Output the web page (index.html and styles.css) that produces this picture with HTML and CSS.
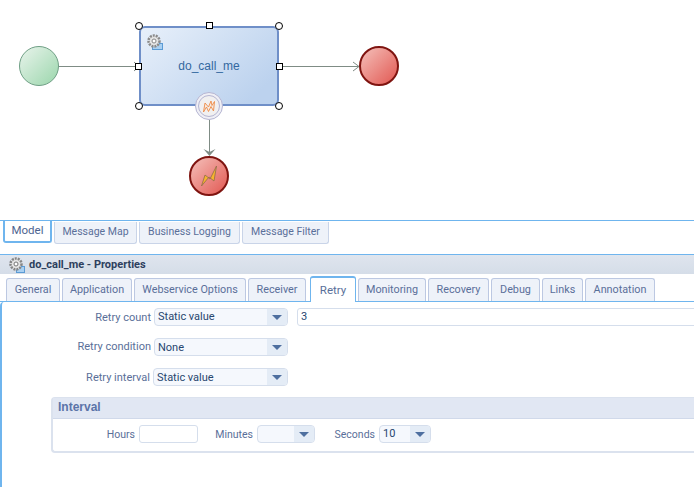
FILE: index.html
```html
<!DOCTYPE html>
<html lang="en">
<head>
<meta charset="utf-8">
<title>do_call_me - Properties</title>
<link rel="stylesheet" href="styles.css">
</head>
<body>
<div class="canvas">
<svg class="diagram" width="694" height="220" viewBox="0 0 694 220" xmlns="http://www.w3.org/2000/svg">
<defs>
<linearGradient id="gGreen" x1="0" y1="0" x2="1" y2="1"><stop offset="0.1" stop-color="#e2f1e6"/><stop offset="0.9" stop-color="#a2d9b2"/></linearGradient>
<linearGradient id="gRed" x1="0" y1="0" x2="1" y2="1"><stop offset="0.1" stop-color="#f3b8b2"/><stop offset="0.9" stop-color="#e3605a"/></linearGradient>
<linearGradient id="gTask" x1="0" y1="0" x2="1" y2="0.6"><stop offset="0" stop-color="#e8f0fa"/><stop offset="1" stop-color="#bcd2ee"/></linearGradient>
</defs>
<g fill="none" stroke="#7f8c85" stroke-width="1">
<path d="M59 66.500H139M134 62l5 4.500-5 4.500"/>
<path d="M279 66.500H359M353 62l6 4.500-6 4.500"/>
<path d="M209.500 120V155"/>
</g>
<path d="M203.500 149l6 7 6-7-6 3z" fill="#7f8c85"/>
<circle cx="39" cy="66" r="19.500" fill="url(#gGreen)" stroke="#6f9f85" stroke-width="1"/>
<circle cx="379" cy="66" r="19" fill="url(#gRed)" stroke="#7f1410" stroke-width="2"/>
<circle cx="209" cy="176" r="19" fill="url(#gRed)" stroke="#7f1410" stroke-width="2"/>
<rect x="140" y="27" width="138" height="78" rx="5" fill="url(#gTask)" stroke="#6f8fc8" stroke-width="2"/>
<g>
<rect x="152.500" y="43.500" width="10" height="6" fill="#a9d0f2" stroke="#5b9bd5"/>
<circle cx="154" cy="41" r="5.500" fill="#e4e4e4" stroke="#8a8a8a" stroke-width="2.500" stroke-dasharray="2 1"/>
<circle cx="154" cy="41" r="2" fill="#fff" stroke="#888"/>
</g>
<text x="209" y="70" class="task-label" text-anchor="middle">do_call_me</text>
<circle cx="209" cy="106" r="13.500" fill="#efeff5" stroke="#b5b5d2" stroke-width="1"/>
<circle cx="209" cy="106" r="10.500" fill="#f1f0f0" stroke="#b5b5d2" stroke-width="1"/>
<path d="M203.500 112l1.500-9 3.500 4 2.500-6 1 4.500 2.500-4-1 9.500-2.500-4.500-2.500 5-2-4.500z" fill="#f4ece6" stroke="#ee8a45" stroke-width="0.900"/>
<path d="M201.500 186l3.500-11 5 4 6.500-13-2.500 15-5-4-7.500 9z" fill="#f7b52c" stroke="#8f6b4a" stroke-width="0.800"/>
<g fill="#fff" stroke="#000">
<circle cx="139" cy="26" r="3.500"/><circle cx="279" cy="26" r="3.500"/>
<circle cx="139" cy="106" r="3.500"/><circle cx="279" cy="106" r="3.500"/>
<rect x="206.500" y="22.500" width="6" height="6"/>
<rect x="135.500" y="63.500" width="6" height="6"/>
<rect x="276.500" y="63.500" width="6" height="6"/>
</g>
</svg>
</div>
<div class="editor">
<nav class="model-tabs">
<span class="mtab mtab-active">Model</span>
<span class="mtab">Message Map</span>
<span class="mtab">Business Logging</span>
<span class="mtab">Message Filter</span>
</nav>
</div>
<div class="props">
<header class="props-title">
<svg class="gear" width="18" height="18" viewBox="0 0 18 18" xmlns="http://www.w3.org/2000/svg">
<rect x="8.500" y="10.500" width="8" height="6" fill="#a9d0f2" stroke="#5b9bd5"/>
<circle cx="8" cy="8" r="5.500" fill="#e4e4e4" stroke="#858585" stroke-width="2.500" stroke-dasharray="2 1"/>
<circle cx="8" cy="8" r="2" fill="#fff" stroke="#777"/>
</svg>
<span>do_call_me - Properties</span>
</header>
<nav class="ptabs">
<span class="ptab ptab-general">General</span>
<span class="ptab ptab-app">Application</span>
<span class="ptab ptab-ws">Webservice Options</span>
<span class="ptab ptab-recv">Receiver</span>
<span class="ptab ptab-active">Retry</span>
<span class="ptab ptab-mon">Monitoring</span>
<span class="ptab ptab-rec">Recovery</span>
<span class="ptab ptab-deb">Debug</span>
<span class="ptab ptab-links">Links</span>
<span class="ptab ptab-ann">Annotation</span>
</nav>
<section class="panel">
<div class="row row-count">
<label class="lbl">Retry count</label>
<div class="select sel-main"><span class="val">Static value</span><span class="arrow"></span></div>
<div class="input input-wide">3</div>
</div>
<div class="row row-cond">
<label class="lbl">Retry condition</label>
<div class="select sel-main"><span class="val">None</span><span class="arrow"></span></div>
</div>
<div class="row row-int">
<label class="lbl lbl-int">Retry interval</label>
<div class="select sel-int"><span class="val">Static value</span><span class="arrow"></span></div>
</div>
<fieldset class="group">
<div class="group-title">Interval</div>
<div class="group-body">
<label class="lbl lbl-hours">Hours</label>
<div class="input input-hours"></div>
<label class="lbl lbl-min">Minutes</label>
<div class="select sel-min"><span class="val"></span><span class="arrow"></span></div>
<label class="lbl lbl-sec">Seconds</label>
<div class="select sel-sec"><span class="val">10</span><span class="arrow"></span></div>
</div>
</fieldset>
</section>
</div>
</body>
</html>
```
FILE: styles.css
```css
* { box-sizing: border-box; }
html, body { margin: 0; padding: 0; height: 100%; overflow: hidden; }
body { width: 694px; height: 487px; background: #fff; font-family: Roboto, "Noto Sans", sans-serif; font-size: 11px; color: #5a6f99; overflow: hidden; }
.canvas { height: 220px; }
.diagram { display: block; }
.task-label { font-family: "Liberation Sans", sans-serif; font-size: 12px; fill: #33689f; }
.editor { height: 34px; border-top: 1px solid #6fb5ee; }
.model-tabs { display: flex; gap: 2px; padding-left: 3px; align-items: flex-start; }
.mtab { height: 22px; margin-top: 1px; background: #eef2f9; border: 1px solid #c9d4e8; border-top: 0; border-radius: 0 0 3px 3px; color: #5a6f99; text-align: center; font-size: 10.500px; line-height: 19px; width: 83px; }
.mtab:nth-child(3) { width: 101px; }
.mtab:nth-child(4) { width: 87px; }
.mtab-active { width: 49px; height: 22px; margin-top: 0; background: #fff; border: 2px solid #6fb5ee; border-top: 0; color: #4d648f; font-size: 11.500px; line-height: 18px; }
.props-title { height: 20px; display: flex; align-items: center; gap: 3px; padding-left: 8px; border-top: 1px solid #6fb5ee; background: linear-gradient(#dfe5ee, #d5dde8); color: #2d3f5e; font-weight: 700; font-size: 11px; }
.gear { flex: none; }
.ptabs { height: 28px; display: flex; align-items: flex-end; padding-left: 6px; gap: 2px; border-bottom: 1px solid #6fb5ee; }
.ptab { height: 23px; background: #eef2f9; border: 1px solid #bcc8e2; border-bottom: 0; border-radius: 3px 3px 0 0; color: #5a6f99; text-align: center; line-height: 21px; font-size: 10.800px; }
.ptab-general { width: 54px; }
.ptab-app { width: 70px; }
.ptab-ws { width: 112px; }
.ptab-recv { width: 58px; }
.ptab-active { width: 46px; height: 26px; margin-left: 2px; margin-bottom: -1px; background: #fff; border: 1px solid #6fb5ee; border-top-width: 2px; border-bottom: 0; font-size: 11.500px; line-height: 24px; }
.ptab-mon { width: 68px; }
.ptab-rec { width: 61px; }
.ptab-deb { width: 49px; }
.ptab-links { width: 41px; }
.ptab-ann { width: 70px; }
.panel { height: 185px; padding-top: 6px; border-left: 2px solid #6fb5ee; border-top-left-radius: 4px; }
.row { display: flex; align-items: center; height: 18px; margin-bottom: 12px; }
.lbl { color: #5a6f99; white-space: nowrap; font-size: 11px; line-height: 15px; flex: none; text-align: right; }
.row .lbl { width: 149px; }
.row .lbl-int { width: 148px; }
.row-cond .lbl { line-height: 13px; padding-bottom: 2px; }
.select { display: flex; height: 18px; border: 1px solid #d5deec; border-radius: 4px; background: #f5f8fd; overflow: hidden; flex: none; }
.val { flex: 1; padding-left: 3px; color: #27466f; font-size: 11px; line-height: 16px; }
.row-cond .val, .row-int .val { line-height: 18px; }
.arrow { width: 20px; background: #e4ecf6; position: relative; flex: none; }
.arrow::after { content: ""; position: absolute; left: 5px; top: 6px; border: 5px solid transparent; border-top: 5px solid #4e6f9f; border-bottom: 0; }
.sel-main { width: 134px; margin-left: 3px; }
.sel-int { width: 135px; margin-left: 3px; }
.input { height: 18px; border: 1px solid #d5deec; border-radius: 3px; background: #fff; color: #27466f; line-height: 15px; padding-left: 3px; flex: none; }
.input-wide { width: 420px; margin-left: 9px; }
.group { margin: -1px 0 0 49px; padding: 0; width: 660px; height: 56px; border: 2px solid #dbe2ee; border-right: 0; border-radius: 4px 0 0 4px; border-top-width: 1px; }
.group-title { height: 21px; background: #e1e7f3; border-bottom: 1px solid #d0d9ea; color: #5b74a8; font-family: "Liberation Sans", sans-serif; font-weight: 700; font-size: 12px; line-height: 18px; padding-left: 5px; }
.group-body { display: flex; align-items: center; height: 30px; }
.group-body .lbl { font-size: 10.500px; }
.lbl-hours { width: 82px; }
.input-hours { width: 59px; margin-left: 4px; }
.lbl-min { width: 55px; }
.sel-min { width: 58px; margin-left: 4px; }
.lbl-sec { width: 60px; }
.sel-sec { width: 52px; margin-left: 4px; }
```
